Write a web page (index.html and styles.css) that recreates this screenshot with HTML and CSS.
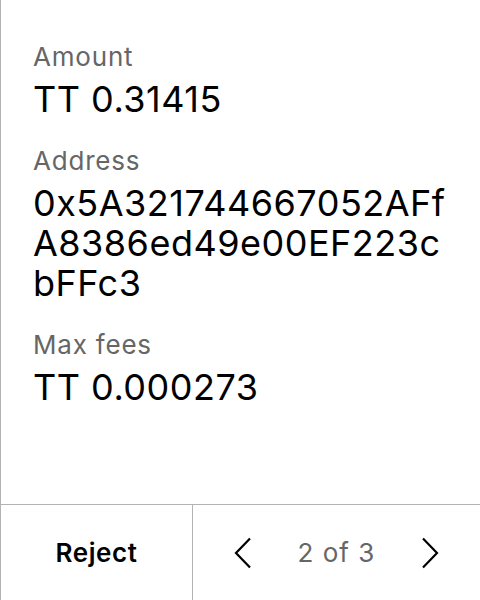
FILE: index.html
```html
<!DOCTYPE html>
<html>
<head>
<meta charset="utf-8">
<link rel="stylesheet" href="styles.css">
</head>
<body>
<div class="screen">
  <div class="content">
    <div class="field">
      <div class="label">Amount</div>
      <div class="value">TT 0.31415</div>
    </div>
    <div class="field">
      <div class="label">Address</div>
      <div class="value address">0x5A321744667052AFfA8386ed49e00EF223cbFFc3</div>
    </div>
    <div class="field">
      <div class="label">Max fees</div>
      <div class="value">TT 0.000273</div>
    </div>
  </div>
  <div class="footer">
    <div class="reject">Reject</div>
    <div class="pager">
      <svg class="chev" width="18" height="32" viewBox="0 0 18 32"><path d="M16 1.5 L2 16 L16 30.5" fill="none" stroke="#000" stroke-width="2.2"/></svg>
      <span class="page">2 of 3</span>
      <svg class="chev" width="18" height="32" viewBox="0 0 18 32"><path d="M2 1.5 L16 16 L2 30.5" fill="none" stroke="#000" stroke-width="2.2"/></svg>
    </div>
  </div>
</div>
</body>
</html>
```
FILE: styles.css
```css
html, body {
  margin: 0;
  padding: 0;
  background: #fff;
}
body {
  font-family: Inter, "Noto Sans", sans-serif;
  color: #000;
}
.screen {
  width: 480px;
  height: 600px;
  box-sizing: border-box;
  border-left: 1px solid #b3b3b3;
  display: flex;
  flex-direction: column;
}
.content {
  flex: 1;
  padding: 41px 28px 0 32px;
  display: flex;
  flex-direction: column;
  gap: 26px;
}
.label {
  font-size: 26px;
  line-height: 32px;
  color: #666;
  letter-spacing: 0.8px;
}
.value {
  font-size: 36px;
  line-height: 40px;
  margin-top: 6px;
  letter-spacing: 0.5px;
}
.address {
  word-break: break-all;
}
.footer {
  height: 95px;
  border-top: 1px solid #b3b3b3;
  display: flex;
}
.reject {
  width: 191px;
  border-right: 1px solid #b3b3b3;
  display: flex;
  align-items: center;
  justify-content: center;
  font-size: 26px;
  font-weight: 600;
  letter-spacing: 0.6px;
}
.pager {
  flex: 1;
  display: flex;
  align-items: center;
  justify-content: space-between;
  padding: 0 41px 0 41px;
}
.page {
  font-size: 26px;
  color: #666;
  letter-spacing: 1px;
}
.chev {
  display: block;
}
```
